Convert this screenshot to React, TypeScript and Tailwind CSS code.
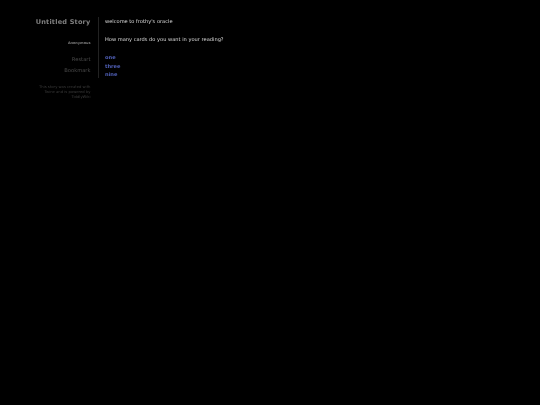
export default function App() {
  return (
    <div className="flex min-h-[405px] w-[540px] items-start bg-black pt-[17px] font-['DejaVu_Sans',sans-serif]">
      <div className="flex w-[90.5px] flex-col items-end text-right [will-change:transform]">
        <h1 className="text-[6.55px] leading-[10px] font-bold tracking-[0.2px] text-[#808080]">Untitled Story</h1>
        <div className="mt-[13.5px] text-[3.45px] leading-[5px] font-bold text-[#808080]">Anonymous</div>
        <div className="mt-[10px] text-[5.2px] leading-[7px] text-[#4a4a4a]">Restart</div>
        <div className="mt-[4px] text-[5.2px] leading-[7px] text-[#4a4a4a]">Bookmark</div>
        <div className="mt-[11px] w-[56px] text-[3.75px] leading-[5.3px] text-[#3a3a3a]">
          This story was created with Twine and is powered by TiddlyWiki
        </div>
      </div>
      <div className="ml-[7.5px] flex h-[61px] flex-col border-l border-[#222222] pl-[6px] text-[5.1px] text-[#dddddd] [will-change:transform]">
        <p className="mt-[1px] leading-[7px]">welcome to frothy's oracle</p>
        <p className="mt-[11px] leading-[7px]">How many cards do you want in your reading?</p>
        <ul className="mt-[11px] flex flex-col gap-[1.7px] font-bold text-[#5060b8]">
          <li className="leading-[7px]">one</li>
          <li className="leading-[7px]">three</li>
          <li className="leading-[7px]">nine</li>
        </ul>
      </div>
    </div>
  );
}
